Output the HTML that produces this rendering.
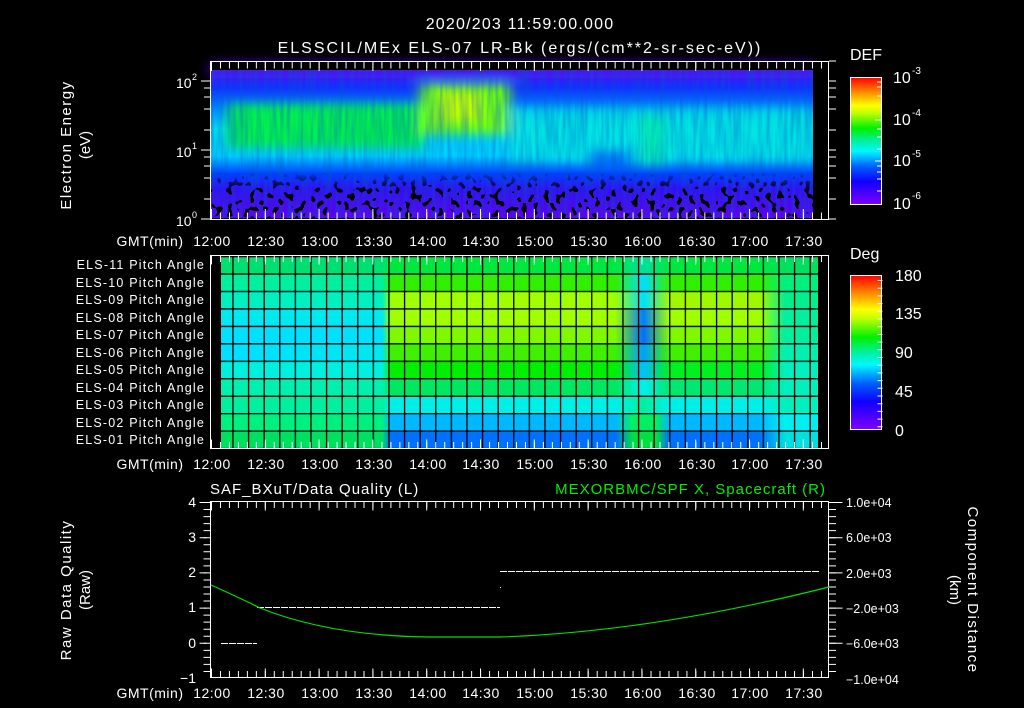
<!DOCTYPE html>
<html><head><meta charset="utf-8"><style>
html,body{margin:0;padding:0;background:#000;}
svg{display:block}
text{font-family:"Liberation Sans",sans-serif;fill:#fff;}
</style></head><body>
<svg width="1024" height="708" viewBox="0 0 1024 708" xmlns="http://www.w3.org/2000/svg">
<defs>
<linearGradient id="cb" x1="0" y1="1" x2="0" y2="0">
<stop offset="0" stop-color="#8000ff"/><stop offset="0.18" stop-color="#1000ff"/><stop offset="0.3" stop-color="#0060ff"/>
<stop offset="0.42" stop-color="#00f8ff"/><stop offset="0.5" stop-color="#00f0a0"/><stop offset="0.6" stop-color="#00f000"/>
<stop offset="0.72" stop-color="#c0ff00"/><stop offset="0.78" stop-color="#ffff00"/><stop offset="0.88" stop-color="#ff9000"/><stop offset="1" stop-color="#ff0000"/>
</linearGradient>
<linearGradient id="sbase" x1="0" y1="70" x2="0" y2="218" gradientUnits="userSpaceOnUse">
<stop offset="0" stop-color="#4020f0"/><stop offset="0.12" stop-color="#1030ff"/><stop offset="0.25" stop-color="#0080ff"/>
<stop offset="0.4" stop-color="#00d8f0"/><stop offset="0.58" stop-color="#00d0ff"/><stop offset="0.7" stop-color="#0040ff"/>
<stop offset="0.8" stop-color="#3010f0"/><stop offset="1" stop-color="#6000ee"/>
</linearGradient>
<filter id="bl" x="-20%" y="-50%" width="140%" height="200%"><feGaussianBlur stdDeviation="6 5"/></filter>
<filter id="spk" x="0" y="0" width="100%" height="100%">
<feTurbulence type="fractalNoise" baseFrequency="0.18 0.16" numOctaves="1" seed="3"/>
<feComponentTransfer><feFuncA type="discrete" tableValues="0 0 0 1 1"/></feComponentTransfer>
<feColorMatrix type="matrix" values="0 0 0 0 0  0 0 0 0 0  0 0 0 0 0  0 0 0 1 0"/>
</filter>
<filter id="str" x="0" y="0" width="100%" height="100%">
<feTurbulence type="fractalNoise" baseFrequency="0.25 0.02" numOctaves="2" seed="7"/>
<feColorMatrix type="matrix" values="0 0 0 0 0  0 0 0 0 0.1  0 0 0 0 0.6  0 0 0 0.8 -0.25"/>
</filter>
<linearGradient id="fade" x1="0" y1="172" x2="0" y2="192" gradientUnits="userSpaceOnUse"><stop offset="0" stop-color="#fff" stop-opacity="0"/><stop offset="1" stop-color="#fff"/></linearGradient>
<mask id="bm"><rect x="211" y="170" width="602" height="48" fill="url(#fade)"/></mask>
<pattern id="grid" x="232.3" y="273.4" width="15.6" height="17.45" patternUnits="userSpaceOnUse">
<rect x="0" y="0" width="1.3" height="17.45" fill="#000"/><rect x="0" y="0" width="15.6" height="1.3" fill="#000"/>
</pattern>
<linearGradient id="r11" x1="221" x2="818" gradientUnits="userSpaceOnUse"><stop offset="0" stop-color="#00e070"/><stop offset=".27" stop-color="#00e070"/><stop offset=".285" stop-color="#00e840"/><stop offset=".66" stop-color="#00e840"/><stop offset=".708" stop-color="#00e0a0"/><stop offset=".75" stop-color="#00e840"/><stop offset=".903" stop-color="#00e840"/><stop offset=".945" stop-color="#00e060"/><stop offset="1" stop-color="#00e060"/></linearGradient>
<linearGradient id="r10" x1="221" x2="818" gradientUnits="userSpaceOnUse"><stop offset="0" stop-color="#00f0a0"/><stop offset=".27" stop-color="#00f0a0"/><stop offset=".285" stop-color="#30f000"/><stop offset=".66" stop-color="#30f000"/><stop offset=".708" stop-color="#00e0ff"/><stop offset=".75" stop-color="#30f000"/><stop offset=".903" stop-color="#30f000"/><stop offset=".945" stop-color="#00f080"/><stop offset="1" stop-color="#00f080"/></linearGradient>
<linearGradient id="r9" x1="221" x2="818" gradientUnits="userSpaceOnUse"><stop offset="0" stop-color="#00f0c0"/><stop offset=".27" stop-color="#00f0c0"/><stop offset=".285" stop-color="#a0ff00"/><stop offset=".66" stop-color="#a0ff00"/><stop offset=".708" stop-color="#00e0ff"/><stop offset=".75" stop-color="#a0f800"/><stop offset=".903" stop-color="#a0f800"/><stop offset=".945" stop-color="#00f090"/><stop offset="1" stop-color="#00f090"/></linearGradient>
<linearGradient id="r8" x1="221" x2="818" gradientUnits="userSpaceOnUse"><stop offset="0" stop-color="#00e8f0"/><stop offset=".27" stop-color="#00e8f0"/><stop offset=".285" stop-color="#a0ff00"/><stop offset=".66" stop-color="#a0ff00"/><stop offset=".708" stop-color="#0080ff"/><stop offset=".75" stop-color="#a0ff00"/><stop offset=".903" stop-color="#a0ff00"/><stop offset=".945" stop-color="#00f0a0"/><stop offset="1" stop-color="#00f0a0"/></linearGradient>
<linearGradient id="r7" x1="221" x2="818" gradientUnits="userSpaceOnUse"><stop offset="0" stop-color="#00e0ff"/><stop offset=".27" stop-color="#00e0ff"/><stop offset=".285" stop-color="#80f800"/><stop offset=".66" stop-color="#80f800"/><stop offset=".708" stop-color="#0070ff"/><stop offset=".75" stop-color="#80f800"/><stop offset=".903" stop-color="#80f800"/><stop offset=".945" stop-color="#00f0a0"/><stop offset="1" stop-color="#00f0a0"/></linearGradient>
<linearGradient id="r6" x1="221" x2="818" gradientUnits="userSpaceOnUse"><stop offset="0" stop-color="#00e0ff"/><stop offset=".27" stop-color="#00e8f0"/><stop offset=".285" stop-color="#40f000"/><stop offset=".66" stop-color="#40f000"/><stop offset=".708" stop-color="#00a0ff"/><stop offset=".75" stop-color="#40f000"/><stop offset=".903" stop-color="#40f000"/><stop offset=".945" stop-color="#00f0b0"/><stop offset="1" stop-color="#00f0b0"/></linearGradient>
<linearGradient id="r5" x1="221" x2="818" gradientUnits="userSpaceOnUse"><stop offset="0" stop-color="#00f0e0"/><stop offset=".27" stop-color="#00f0e0"/><stop offset=".285" stop-color="#00f000"/><stop offset=".66" stop-color="#00f000"/><stop offset=".708" stop-color="#00c0ff"/><stop offset=".75" stop-color="#00f020"/><stop offset=".903" stop-color="#00f020"/><stop offset=".945" stop-color="#00f0c0"/><stop offset="1" stop-color="#00f0c0"/></linearGradient>
<linearGradient id="r4" x1="221" x2="818" gradientUnits="userSpaceOnUse"><stop offset="0" stop-color="#00f0b0"/><stop offset=".27" stop-color="#00f0b0"/><stop offset=".285" stop-color="#00e860"/><stop offset=".66" stop-color="#00e860"/><stop offset=".708" stop-color="#00f0f0"/><stop offset=".75" stop-color="#00e870"/><stop offset=".903" stop-color="#00e870"/><stop offset=".945" stop-color="#00f0c0"/><stop offset="1" stop-color="#00f0c0"/></linearGradient>
<linearGradient id="r3" x1="221" x2="818" gradientUnits="userSpaceOnUse"><stop offset="0" stop-color="#00f0a0"/><stop offset=".27" stop-color="#00f0a0"/><stop offset=".285" stop-color="#00f0e8"/><stop offset=".66" stop-color="#00f0e8"/><stop offset=".708" stop-color="#00f0a0"/><stop offset=".75" stop-color="#00f0e8"/><stop offset=".903" stop-color="#00f0e8"/><stop offset=".945" stop-color="#00f0c0"/><stop offset="1" stop-color="#00f0c0"/></linearGradient>
<linearGradient id="r2" x1="221" x2="818" gradientUnits="userSpaceOnUse"><stop offset="0" stop-color="#00f080"/><stop offset=".27" stop-color="#00f080"/><stop offset=".285" stop-color="#00b8ff"/><stop offset=".66" stop-color="#00b8ff"/><stop offset=".69" stop-color="#00f060"/><stop offset=".73" stop-color="#00f060"/><stop offset=".75" stop-color="#00b8ff"/><stop offset=".903" stop-color="#00b8ff"/><stop offset=".945" stop-color="#00f0f0"/><stop offset="1" stop-color="#00f0f0"/></linearGradient>
<linearGradient id="r1" x1="221" x2="818" gradientUnits="userSpaceOnUse"><stop offset="0" stop-color="#00e060"/><stop offset=".27" stop-color="#00e060"/><stop offset=".285" stop-color="#0070ff"/><stop offset=".66" stop-color="#0070ff"/><stop offset=".69" stop-color="#00e040"/><stop offset=".73" stop-color="#00e040"/><stop offset=".75" stop-color="#0070ff"/><stop offset=".903" stop-color="#0070ff"/><stop offset=".945" stop-color="#00e0e0"/><stop offset="1" stop-color="#00e0e0"/></linearGradient>
</defs>

<text x="520" y="29" font-size="16" text-anchor="middle" letter-spacing="1.2">2020/203 11:59:00.000</text>
<text x="520" y="53" font-size="16" text-anchor="middle" letter-spacing="2">ELSSCIL/MEx ELS-07 LR-Bk  (ergs/(cm**2-sr-sec-eV))</text>

<!-- Panel 1 spectrogram -->
<rect x="211" y="70" width="602" height="148" fill="url(#sbase)"/>
<g filter="url(#bl)">
<rect x="228" y="104" width="195" height="44" fill="#00f050"/>
<rect x="420" y="84" width="90" height="50" fill="#70ff10"/>
<rect x="440" y="92" width="40" height="28" fill="#c0ff00"/>
<rect x="510" y="108" width="303" height="52" fill="#00e8e0" opacity="0.85"/>
<rect x="590" y="150" width="40" height="20" fill="#0050ff" opacity="0.7"/>
<rect x="640" y="115" width="25" height="50" fill="#00f0a0" opacity="0.7"/>
<rect x="211" y="62" width="602" height="16" fill="#5010f0" opacity="0.8"/>
</g>
<rect x="211" y="70" width="602" height="148" filter="url(#str)"/>
<g mask="url(#bm)"><rect x="211" y="170" width="602" height="48" filter="url(#spk)"/></g>
<rect x="211" y="62" width="602" height="8" fill="#000"/>
<rect x="813" y="62" width="16" height="158" fill="#000"/>
<rect x="210.5" y="61.5" width="618" height="158" fill="none" stroke="#fff"/>
<line x1="211" x2="829" y1="65" y2="65" stroke="#fff" stroke-width="7" stroke-dasharray="1 7.97"/>
<line x1="211" x2="829" y1="216" y2="216" stroke="#fff" stroke-width="7" stroke-dasharray="1 7.97"/>
<line x1="211" x2="829" y1="66" y2="66" stroke="#fff" stroke-width="10" stroke-dasharray="1 52.8"/>
<line x1="211" x2="829" y1="214" y2="214" stroke="#fff" stroke-width="10" stroke-dasharray="1 52.8"/>
<g stroke="#fff"><line x1="201" x2="210" y1="81" y2="81"/><line x1="201" x2="210" y1="150" y2="150"/><line x1="201" x2="210" y1="219" y2="219"/>
<line x1="204" x2="210" y1="88" y2="88"/><line x1="204" x2="210" y1="97" y2="97"/><line x1="204" x2="210" y1="109" y2="109"/><line x1="204" x2="210" y1="130" y2="130"/>
<line x1="204" x2="210" y1="157" y2="157"/><line x1="204" x2="210" y1="166" y2="166"/><line x1="204" x2="210" y1="178" y2="178"/><line x1="204" x2="210" y1="199" y2="199"/>
<line x1="829" x2="836" y1="81" y2="81"/><line x1="829" x2="836" y1="150" y2="150"/><line x1="829" x2="836" y1="88" y2="88"/><line x1="829" x2="836" y1="97" y2="97"/><line x1="829" x2="836" y1="109" y2="109"/><line x1="829" x2="836" y1="130" y2="130"/><line x1="829" x2="836" y1="157" y2="157"/><line x1="829" x2="836" y1="166" y2="166"/><line x1="829" x2="836" y1="178" y2="178"/><line x1="829" x2="836" y1="199" y2="199"/><line x1="829" x2="836" y1="61" y2="61"/><line x1="829" x2="836" y1="219" y2="219"/></g>
<text x="176" y="88" font-size="14">10</text><text x="192" y="80" font-size="9">2</text>
<text x="176" y="157" font-size="14">10</text><text x="192" y="149" font-size="9">1</text>
<text x="176" y="226" font-size="14">10</text><text x="192" y="218" font-size="9">0</text>
<text transform="translate(71,145) rotate(-90)" font-size="15" text-anchor="middle" letter-spacing="1.5">Electron Energy</text>
<text transform="translate(90,145) rotate(-90)" font-size="15" text-anchor="middle">(eV)</text>

<g font-size="14" text-anchor="middle" letter-spacing="0.5">
<text x="150" y="246">GMT(min)</text><text x="212" y="246">12:00</text><text x="266" y="246">12:30</text><text x="320" y="246">13:00</text><text x="374" y="246">13:30</text><text x="428" y="246">14:00</text><text x="481" y="246">14:30</text><text x="535" y="246">15:00</text><text x="589" y="246">15:30</text><text x="643" y="246">16:00</text><text x="697" y="246">16:30</text><text x="750" y="246">17:00</text><text x="804" y="246">17:30</text>
<text x="150" y="469">GMT(min)</text><text x="212" y="469">12:00</text><text x="266" y="469">12:30</text><text x="320" y="469">13:00</text><text x="374" y="469">13:30</text><text x="428" y="469">14:00</text><text x="481" y="469">14:30</text><text x="535" y="469">15:00</text><text x="589" y="469">15:30</text><text x="643" y="469">16:00</text><text x="697" y="469">16:30</text><text x="750" y="469">17:00</text><text x="804" y="469">17:30</text>
<text x="150" y="698">GMT(min)</text><text x="212" y="698">12:00</text><text x="266" y="698">12:30</text><text x="320" y="698">13:00</text><text x="374" y="698">13:30</text><text x="428" y="698">14:00</text><text x="481" y="698">14:30</text><text x="535" y="698">15:00</text><text x="589" y="698">15:30</text><text x="643" y="698">16:00</text><text x="697" y="698">16:30</text><text x="750" y="698">17:00</text><text x="804" y="698">17:30</text>
</g>

<text x="850" y="60" font-size="16">DEF</text>
<rect x="850.5" y="77.5" width="31" height="127" fill="url(#cb)" stroke="#fff"/>
<g stroke="#fff"><line x1="877" x2="882" y1="82" y2="82"/><line x1="877" x2="882" y1="87" y2="87"/><line x1="877" x2="882" y1="96" y2="96"/><line x1="875" x2="882" y1="120" y2="120"/><line x1="877" x2="882" y1="129" y2="129"/><line x1="877" x2="882" y1="137" y2="137"/><line x1="877" x2="882" y1="149" y2="149"/><line x1="875" x2="882" y1="161" y2="161"/><line x1="877" x2="882" y1="166" y2="166"/><line x1="877" x2="882" y1="172" y2="172"/><line x1="877" x2="882" y1="179" y2="179"/><line x1="877" x2="882" y1="191" y2="191"/></g>
<g font-size="16"><text x="893" y="83">10</text><text x="893" y="125">10</text><text x="893" y="166">10</text><text x="893" y="209">10</text></g>
<g font-size="10"><text x="912" y="74">-3</text><text x="912" y="116">-4</text><text x="912" y="157">-5</text><text x="912" y="199">-6</text></g>

<!-- Panel 2 -->
<rect x="221" y="256" width="597" height="17.4" fill="url(#r11)"/>
<rect x="221" y="273.4" width="597" height="17.5" fill="url(#r10)"/>
<rect x="221" y="290.9" width="597" height="17.5" fill="url(#r9)"/>
<rect x="221" y="308.4" width="597" height="17.5" fill="url(#r8)"/>
<rect x="221" y="325.9" width="597" height="17.5" fill="url(#r7)"/>
<rect x="221" y="343.4" width="597" height="17.5" fill="url(#r6)"/>
<rect x="221" y="360.9" width="597" height="17.5" fill="url(#r5)"/>
<rect x="221" y="378.4" width="597" height="17.5" fill="url(#r4)"/>
<rect x="221" y="395.9" width="597" height="17.5" fill="url(#r3)"/>
<rect x="221" y="413.4" width="597" height="17.5" fill="url(#r2)"/>
<rect x="221" y="430.9" width="597" height="18" fill="url(#r1)"/>
<rect x="221" y="256" width="597" height="193" fill="url(#grid)"/>
<rect x="210.5" y="255.5" width="618" height="193" fill="none" stroke="#fff"/>
<line x1="211" x2="829" y1="259" y2="259" stroke="#fff" stroke-width="6" stroke-dasharray="1 7.97"/>
<line x1="211" x2="829" y1="445" y2="445" stroke="#fff" stroke-width="6" stroke-dasharray="1 7.97"/>
<line x1="211" x2="829" y1="260" y2="260" stroke="#fff" stroke-width="9" stroke-dasharray="1 52.8"/>
<line x1="211" x2="829" y1="444" y2="444" stroke="#fff" stroke-width="9" stroke-dasharray="1 52.8"/>
<g font-size="12.5" text-anchor="end" letter-spacing="1.2">
<text x="205" y="269">ELS-11 Pitch Angle</text><text x="205" y="287">ELS-10 Pitch Angle</text><text x="205" y="304">ELS-09 Pitch Angle</text><text x="205" y="322">ELS-08 Pitch Angle</text><text x="205" y="339">ELS-07 Pitch Angle</text><text x="205" y="357">ELS-06 Pitch Angle</text><text x="205" y="374">ELS-05 Pitch Angle</text><text x="205" y="392">ELS-04 Pitch Angle</text><text x="205" y="409">ELS-03 Pitch Angle</text><text x="205" y="427">ELS-02 Pitch Angle</text><text x="205" y="444">ELS-01 Pitch Angle</text>
</g>
<text x="850" y="259" font-size="16">Deg</text>
<rect x="850.5" y="275.5" width="31" height="154" fill="url(#cb)" stroke="#fff"/>
<line x1="880" x2="880" y1="280" y2="428" stroke="#fff" stroke-width="5" stroke-dasharray="1 6.7"/>
<g font-size="16"><text x="895" y="281">180</text><text x="895" y="319">135</text><text x="895" y="358">90</text><text x="895" y="397">45</text><text x="895" y="436">0</text></g>

<!-- Panel 3 -->
<text x="210" y="494" font-size="15" letter-spacing="1">SAF_BXuT/Data Quality (L)</text>
<text x="826" y="494" font-size="15" text-anchor="end" letter-spacing="1" style="fill:#00ee00">MEXORBMC/SPF X, Spacecraft (R)</text>
<rect x="210.5" y="501.5" width="618" height="176" fill="none" stroke="#fff"/>
<line x1="211" x2="829" y1="505" y2="505" stroke="#fff" stroke-width="6" stroke-dasharray="1 7.97"/>
<line x1="211" x2="829" y1="674" y2="674" stroke="#fff" stroke-width="6" stroke-dasharray="1 7.97"/>
<line x1="211" x2="829" y1="506" y2="506" stroke="#fff" stroke-width="9" stroke-dasharray="1 52.8"/>
<line x1="211" x2="829" y1="673" y2="673" stroke="#fff" stroke-width="9" stroke-dasharray="1 52.8"/>
<line x1="207" x2="207" y1="502" y2="678" stroke="#fff" stroke-width="7" stroke-dasharray="1 6.04"/>
<line x1="203" x2="203" y1="502" y2="678" stroke="#fff" stroke-width="7" stroke-dasharray="1 34.2"/>
<line x1="832.5" x2="832.5" y1="502" y2="678" stroke="#fff" stroke-width="7" stroke-dasharray="1 6.04"/>
<line x1="836" x2="836" y1="502" y2="678" stroke="#fff" stroke-width="13" stroke-dasharray="1 34.2"/>
<g font-size="14" text-anchor="end"><text x="196" y="507">4</text><text x="196" y="542">3</text><text x="196" y="577">2</text><text x="196" y="612">1</text><text x="196" y="648">0</text><text x="196" y="683">−1</text></g>
<g font-size="12.5"><text x="846" y="507">1.0e+04</text><text x="846" y="542">6.0e+03</text><text x="846" y="578">2.0e+03</text><text x="846" y="613">−2.0e+03</text><text x="846" y="648">−6.0e+03</text><text x="846" y="684">−1.0e+04</text></g>
<text transform="translate(71,590) rotate(-90)" font-size="15" text-anchor="middle" letter-spacing="1.5">Raw Data Quality</text>
<text transform="translate(90,590) rotate(-90)" font-size="15" text-anchor="middle">(Raw)</text>
<text transform="translate(968,590) rotate(90)" font-size="15" text-anchor="middle" letter-spacing="1.5">Component Distance</text>
<text transform="translate(950,590) rotate(90)" font-size="15" text-anchor="middle">(km)</text>
<g stroke="#fff" stroke-width="1" stroke-dasharray="7 1">
<line x1="221" x2="257" y1="643.5" y2="643.5"/>
<line x1="257" x2="500" y1="607.5" y2="607.5"/>
<line x1="500" x2="819" y1="571.5" y2="571.5"/>
</g>
<rect x="500" y="587" width="1" height="1" fill="#fff"/>
<path d="M211 585 Q 240 598 260 608 Q 330 636 430 637 L 500 637 Q 650 632 829 587" fill="none" stroke="#00e000" stroke-width="1.2"/>
</svg>
</body></html>
